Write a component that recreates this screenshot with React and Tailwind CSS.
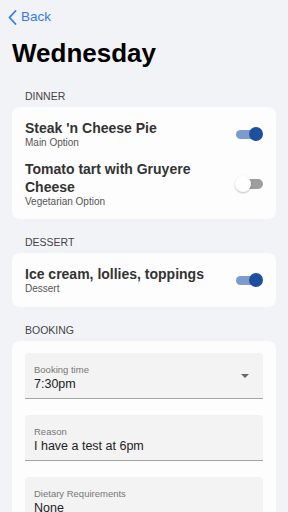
import React from "react";

const font = { fontFamily: '"Liberation Sans", Arial, sans-serif' };

function Toggle({ on }) {
	return (
		<div className="relative w-[28px] h-[16px] shrink-0">
			<div
				className={
					on
						? "absolute left-[1px] right-[2px] top-[3.5px] h-[9px] rounded-full bg-[#7f9bcc]"
						: "absolute left-[5px] right-0 top-[3px] h-[10px] rounded-full bg-[#9e9e9e]"
				}
			/>
			{on ? (
				<div className="absolute right-0 top-[1px] w-[14px] h-[14px] rounded-full bg-[#1e4f9e]" />
			) : (
				<div className="absolute left-0 top-0 w-[16px] h-[16px] rounded-full bg-white shadow-[0_1px_2px_rgba(0,0,0,0.25)]" />
			)}
		</div>
	);
}

function MealRow({ title, subtitle, on }) {
	return (
		<div className="flex items-center justify-between">
			<div className="w-[200px]">
				<p className="text-[14px] leading-[18px] font-bold text-[#333]">{title}</p>
				<p className="text-[10px] leading-[12px] text-[#555]">{subtitle}</p>
			</div>
			<div className="mr-[1px]">
				<Toggle on={on} />
			</div>
		</div>
	);
}

function SectionLabel({ children }) {
	return (
		<p className="pl-[25px] text-[10.5px] leading-[14px] text-[#444] uppercase">{children}</p>
	);
}

function Field({ label, value, select }) {
	return (
		<div className="relative h-[46px] rounded-t-[4px] bg-[#f3f3f3] border-b border-[#a3a3a3] pl-[9px] pt-[11px]">
			<p className="text-[9.5px] leading-[12px] text-[#777]">{label}</p>
			<p className="text-[12.5px] leading-[16px] text-[#222]">{value}</p>
			{select && (
				<svg className="absolute right-[14px] top-[21px]" width="8" height="4" viewBox="0 0 8 4">
					<path d="M0 0 L8 0 L4 4 Z" fill="#666" />
				</svg>
			)}
		</div>
	);
}

export default function App() {
	return (
		<div className="w-[288px] min-h-[512px] bg-[#f2f3f7] pb-10" style={font}>
			<div className="flex items-center h-[34px] pl-[8px]">
				<svg width="9" height="15" viewBox="0 0 9 15">
					<path d="M7.5 1 L1.5 7.5 L7.5 14" fill="none" stroke="#3478f6" strokeWidth="1.8" strokeLinecap="round" strokeLinejoin="round" />
				</svg>
				<span className="ml-[4px] text-[13.5px] text-[#3478f6]">Back</span>
			</div>
			<h1 className="pl-[12px] mt-[3px] text-[26px] leading-[32px] font-bold text-black">Wednesday</h1>

			<div className="mt-[20px]">
				<SectionLabel>Dinner</SectionLabel>
				<div className="mx-[12px] mt-[4px] rounded-[8px] bg-[#fdfdfd] pl-[13px] pr-[12px] pt-[12px] pb-[11px] flex flex-col gap-[11px]">
					<MealRow title="Steak 'n Cheese Pie" subtitle="Main Option" on />
					<MealRow title="Tomato tart with Gruyere Cheese" subtitle="Vegetarian Option" />
				</div>
			</div>

			<div className="mt-[16px]">
				<SectionLabel>Dessert</SectionLabel>
				<div className="mx-[12px] mt-[4px] rounded-[8px] bg-[#fdfdfd] pl-[13px] pr-[12px] pt-[12px] pb-[12px]">
					<MealRow title="Ice cream, lollies, toppings" subtitle="Dessert" on />
				</div>
			</div>

			<div className="mt-[16px]">
				<SectionLabel>Booking</SectionLabel>
				<div className="mx-[12px] mt-[4px] rounded-[8px] bg-[#fdfdfd] px-[13px] pt-[12px] pb-[14px] flex flex-col gap-[16px]">
					<Field label="Booking time" value="7:30pm" select />
					<Field label="Reason" value="I have a test at 6pm" />
					<Field label="Dietary Requirements" value="None" />
				</div>
			</div>
		</div>
	);
}
